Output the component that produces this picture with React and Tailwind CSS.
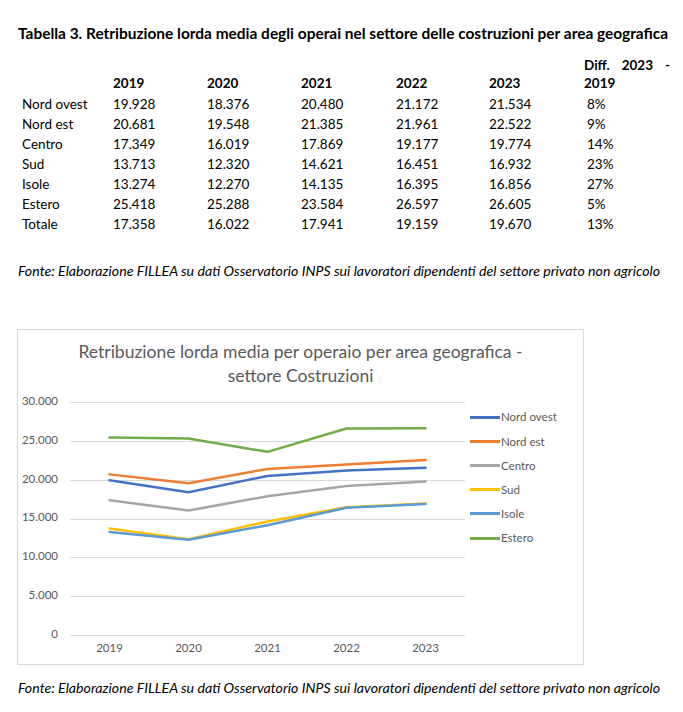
import React from 'react';

const years = ['2019', '2020', '2021', '2022', '2023'];

const rows = [
  ['Nord ovest', '19.928', '18.376', '20.480', '21.172', '21.534', '8%'],
  ['Nord est', '20.681', '19.548', '21.385', '21.961', '22.522', '9%'],
  ['Centro', '17.349', '16.019', '17.869', '19.177', '19.774', '14%'],
  ['Sud', '13.713', '12.320', '14.621', '16.451', '16.932', '23%'],
  ['Isole', '13.274', '12.270', '14.135', '16.395', '16.856', '27%'],
  ['Estero', '25.418', '25.288', '23.584', '26.597', '26.605', '5%'],
  ['Totale', '17.358', '16.022', '17.941', '19.159', '19.670', '13%'],
];

// serie del grafico (Totale escluso)
const series = [
  { name: 'Nord ovest', color: '#4472C4', values: [19928, 18376, 20480, 21172, 21534] },
  { name: 'Nord est', color: '#ED7D31', values: [20681, 19548, 21385, 21961, 22522] },
  { name: 'Centro', color: '#A5A5A5', values: [17349, 16019, 17869, 19177, 19774] },
  { name: 'Sud', color: '#FFC000', values: [13713, 12320, 14621, 16451, 16932] },
  { name: 'Isole', color: '#5B9BD5', values: [13274, 12270, 14135, 16395, 16856] },
  { name: 'Estero', color: '#70AD47', values: [25418, 25288, 23584, 26597, 26605] },
];

const ticks = [30000, 25000, 20000, 15000, 10000, 5000, 0];

const plotLeft = 52;
const plotRight = 447;
const plotTop = 12;
const plotH = 233;
const step = (plotRight - plotLeft) / 5;

const yOf = (v) => plotTop + plotH * (1 - v / 30000);
const xOf = (i) => plotLeft + step / 2 + step * i;

const fmt = (v) => (v === 0 ? '0' : v.toLocaleString('de-DE'));

const cols = 'grid grid-cols-[91px_94px_94px_95px_93px_95px_86px]';

const Chart = () => (
  <div className="ml-[17px] w-[567px] h-[336px] border border-[#d9d9d9] flex flex-col">
    <div className="pt-[10px] text-center text-[17.5px] leading-[24px] text-[#595959]">
      <div>Retribuzione lorda media per operaio per area geografica -</div>
      <div>settore Costruzioni</div>
    </div>
    <div className="flex mt-[2px]">
      <svg width="450" height="270" className="block">
        {ticks.map((t) => (
          <g key={t}>
            <line
              x1={plotLeft}
              x2={plotRight}
              y1={Math.round(yOf(t)) + 0.5}
              y2={Math.round(yOf(t)) + 0.5}
              stroke="#d9d9d9"
              strokeWidth="1"
            />
            <text
              x="40"
              y={yOf(t)}
              textAnchor="end"
              dominantBaseline="middle"
              fontSize="11.5"
              fill="#595959"
            >
              {fmt(t)}
            </text>
          </g>
        ))}
        {years.map((y, i) => (
          <text
            key={y}
            x={xOf(i)}
            y="259"
            textAnchor="middle"
            dominantBaseline="middle"
            fontSize="11.5"
            fill="#595959"
          >
            {y}
          </text>
        ))}
        {series.map((s) => (
          <polyline
            key={s.name}
            points={s.values.map((v, i) => `${xOf(i)},${yOf(v)}`).join(' ')}
            fill="none"
            stroke={s.color}
            strokeWidth="2.5"
            strokeLinejoin="round"
            strokeLinecap="round"
          />
        ))}
      </svg>
      <div className="ml-[2px] pt-[15px] flex flex-col">
        {series.map((s) => (
          <div key={s.name} className="h-[24.2px] flex items-center text-[11.5px] text-[#595959]">
            <span className="w-[30px] h-[3px]" style={{ backgroundColor: s.color }} />
            <span className="ml-[1px]">{s.name}</span>
          </div>
        ))}
      </div>
    </div>
  </div>
);

export default function App() {
  return (
    <div className="bg-white min-h-[712px] text-black font-['Lato',sans-serif] text-[13.5px]">
      <div className="pt-[24px] pl-[18px] font-bold text-[15.45px] leading-[18px]">
        Tabella 3. Retribuzione lorda media degli operai nel settore delle costruzioni per area geografica
      </div>

      {/* Tabella */}
      <div className="mt-[14px] pl-[22px]">
        <div className={`${cols} items-end font-bold leading-[18px]`}>
          <div />
          {years.map((y) => (
            <div key={y}>{y}</div>
          ))}
          <div>
            <div className="flex justify-between">
              <span>Diff.</span>
              <span>2023</span>
              <span>-</span>
            </div>
            <div>2019</div>
          </div>
        </div>
        <div className="mt-[2px]">
          {rows.map((r) => (
            <div key={r[0]} className={`${cols} h-[20px] items-center`}>
              {r.map((c, i) => (
                <div key={i} className={i === 6 ? 'pl-[3px]' : ''}>
                  {c}
                </div>
              ))}
            </div>
          ))}
        </div>
      </div>

      <div className="mt-[27px] pl-[18px] italic text-[14.17px] leading-[20px]">
        Fonte: Elaborazione FILLEA su dati Osservatorio INPS sui lavoratori dipendenti del settore privato non agricolo
      </div>

      <div className="mt-[48px]">
        <Chart />
      </div>

      <div className="mt-[13px] pl-[18px] italic text-[14.17px] leading-[20px]">
        Fonte: Elaborazione FILLEA su dati Osservatorio INPS sui lavoratori dipendenti del settore privato non agricolo
      </div>
    </div>
  );
}
